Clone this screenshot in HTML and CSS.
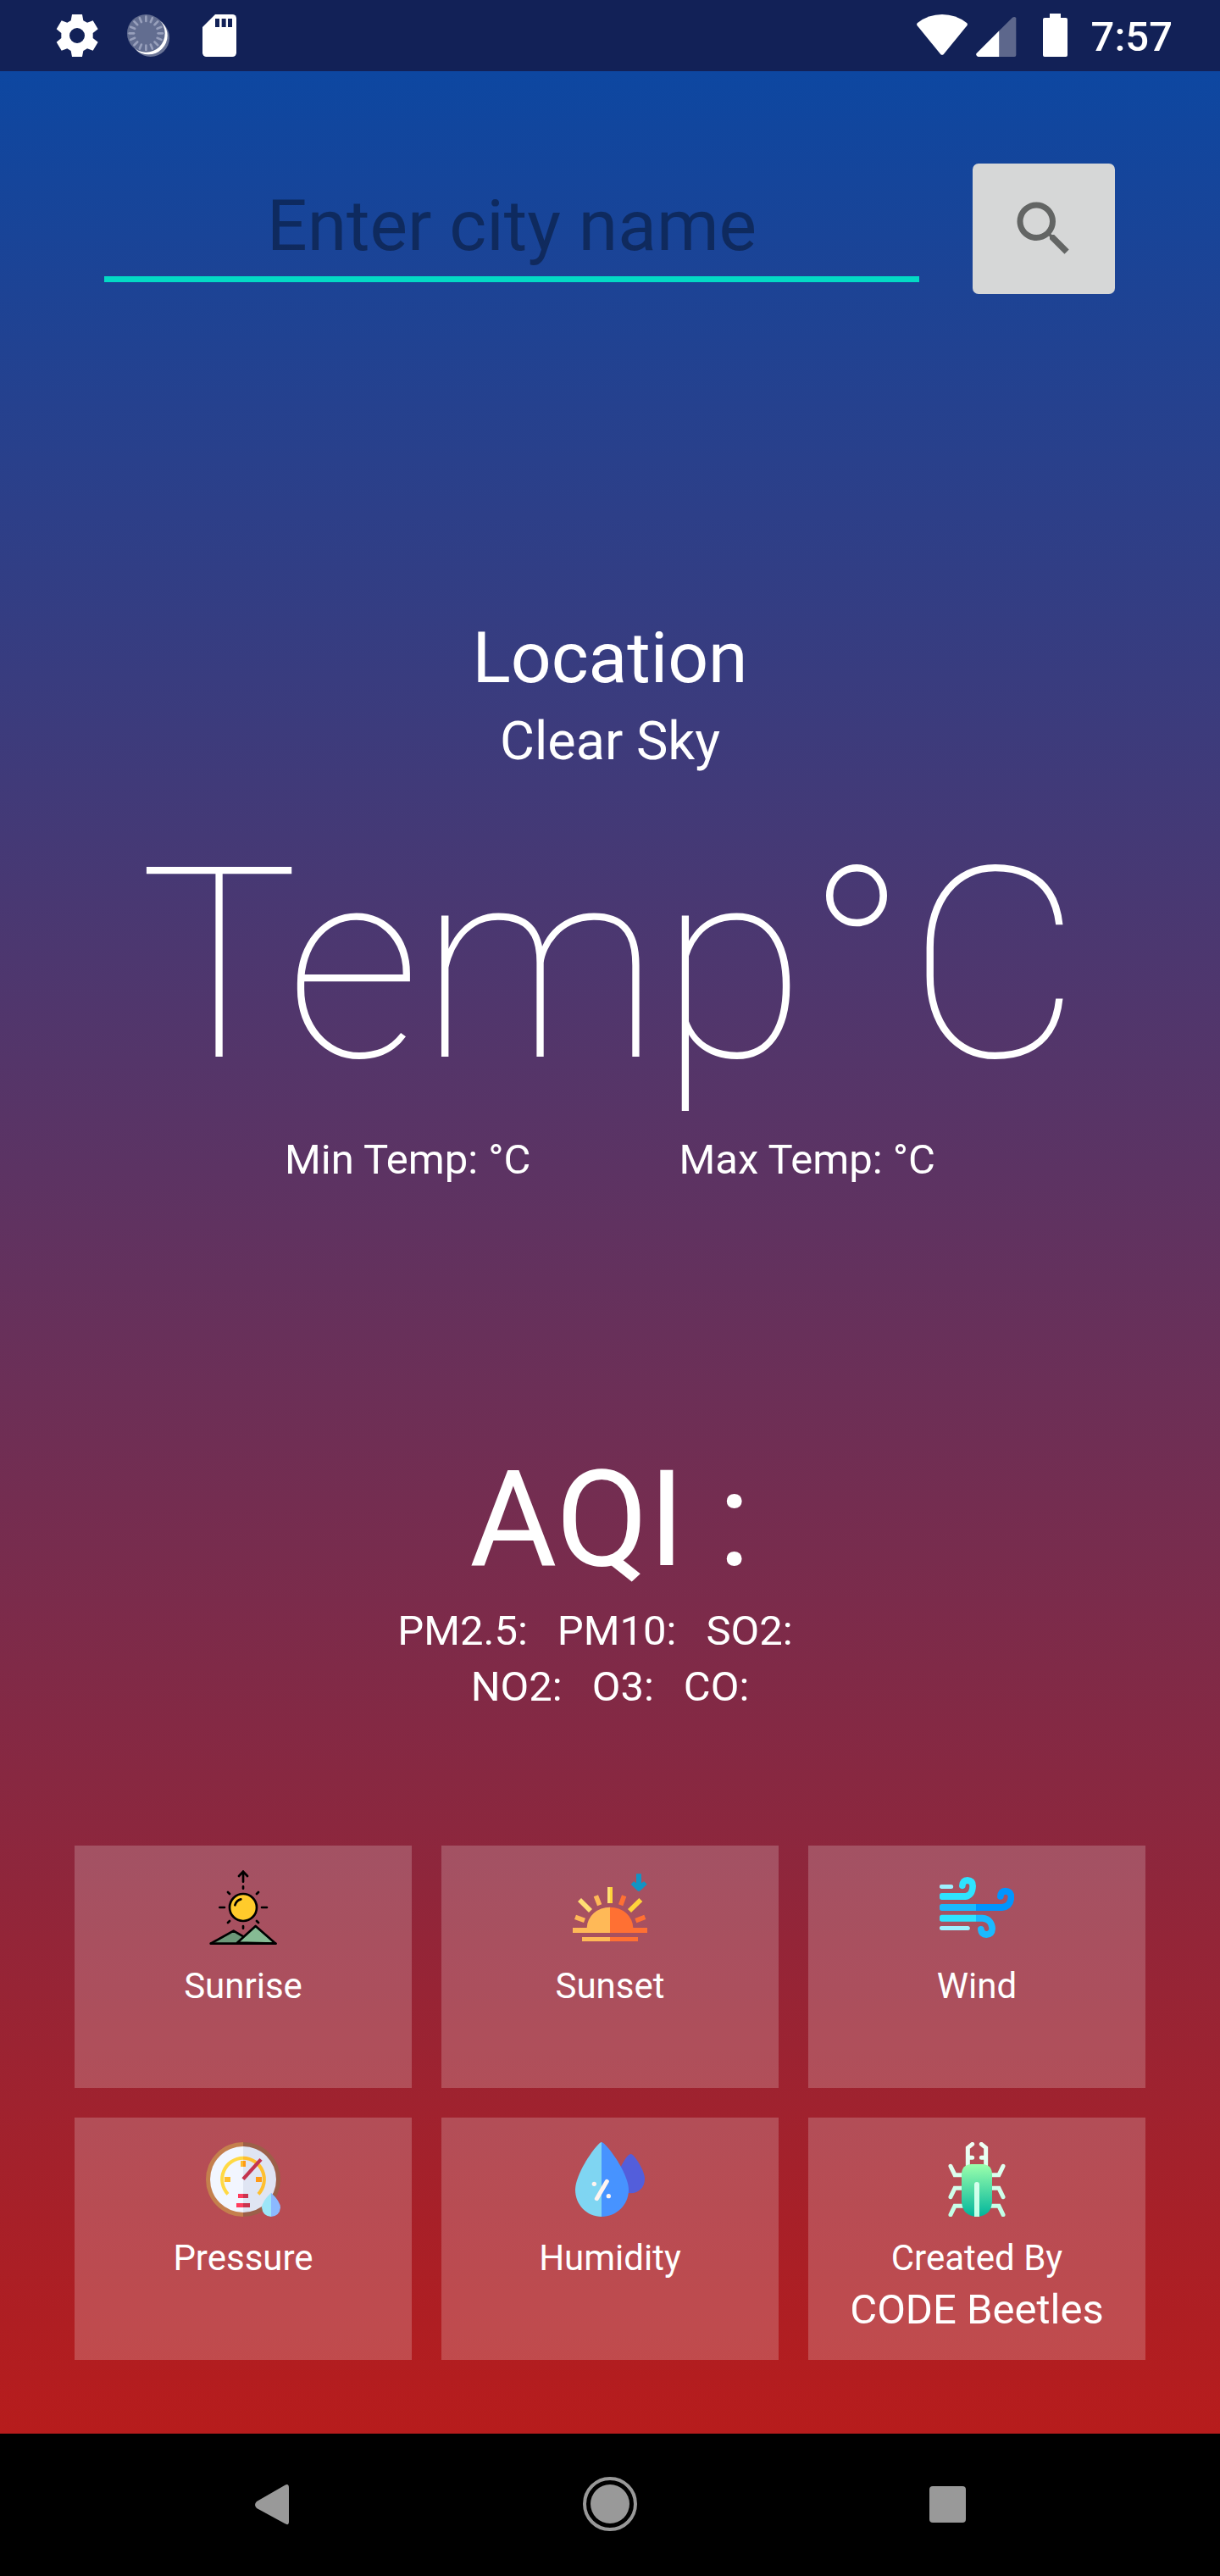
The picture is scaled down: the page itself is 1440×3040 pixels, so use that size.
FILE: index.html
```html
<!DOCTYPE html>
<html lang="en">
<head>
  <meta charset="utf-8">
  <meta name="viewport" content="width=device-width, initial-scale=1">
  <title>Weather</title>
  <link rel="stylesheet" href="styles.css">
</head>
<body>
  <header class="status-bar">
    <div class="status-group status-left">
      <svg class="status-icon" viewBox="183 36 180 180" role="img" aria-label="Settings">
        <path fill="#fff" fill-rule="evenodd" d="M255 51H291L295 73L309 80L329 73L347 103L329 117V135L347 149L329 179L309 172L295 180L291 201H255L251 180L238 172L218 179L200 149L217 135V117L200 103L218 73L238 80L251 73ZM273 99a27 27 0 1 0 0 54a27 27 0 1 0 0-54Z"/>
      </svg>
      <svg class="status-icon" viewBox="435 36 180 180" role="img" aria-label="Syncing">
        <circle cx="533" cy="134" r="67" fill="#6a7496"/>
        <circle cx="526" cy="126" r="67" fill="#fff"/>
        <circle cx="517" cy="118" r="67" fill="#626d90"/>
        <g stroke="#979fbb" stroke-width="8" stroke-linecap="round">
          <path d="M517 59V75"/>
          <path d="M517 59V75" transform="rotate(22.5 517 118)"/>
          <path d="M517 59V75" transform="rotate(45 517 118)"/>
          <path d="M517 59V75" transform="rotate(67.5 517 118)"/>
          <path d="M517 59V75" transform="rotate(90 517 118)"/>
          <path d="M517 59V75" transform="rotate(112.5 517 118)"/>
          <path d="M517 59V75" transform="rotate(135 517 118)"/>
          <path d="M517 59V75" transform="rotate(157.5 517 118)"/>
          <path d="M517 59V75" transform="rotate(180 517 118)"/>
          <path d="M517 59V75" transform="rotate(202.5 517 118)"/>
          <path d="M517 59V75" transform="rotate(225 517 118)"/>
          <path d="M517 59V75" transform="rotate(247.5 517 118)"/>
          <path d="M517 59V75" transform="rotate(270 517 118)"/>
          <path d="M517 59V75" transform="rotate(292.5 517 118)"/>
          <path d="M517 59V75" transform="rotate(315 517 118)"/>
          <path d="M517 59V75" transform="rotate(337.5 517 118)"/>
        </g>
      </svg>
      <svg class="status-icon" viewBox="687 36 180 180" role="img" aria-label="SD card">
        <path fill="#fff" d="M762 51H823a14 14 0 0 1 14 14V187a14 14 0 0 1-14 14H731a14 14 0 0 1-14-14V96Z"/>
        <path fill="#122157" d="M762 66h15v30h-15zM785 66h15v30h-15zM807 66h15v30h-15z"/>
      </svg>
    </div>
    <div class="status-group status-right">
      <svg class="wifi" viewBox="366 48 180 156" role="img" aria-label="Wi-Fi">
        <path fill="#fff" d="M369 81Q407 51 456 51T543 81Q548 85 544 91L462 191Q456 198 450 191L368 91Q364 85 369 81Z"/>
      </svg>
      <svg class="signal" viewBox="575 48 144 156" role="img" aria-label="Mobile signal">
        <path fill="#5d678c" d="M657 109L704 62Q711 57 717 63V195Q717 201 711 201H657Z"/>
        <path fill="#fff" d="M657 109V201H583Q574 199 576 190Z"/>
      </svg>
      <svg class="battery" viewBox="813 48 87 156" role="img" aria-label="Battery">
        <path fill="#fff" d="M837 48H876V63H894Q900 63 900 69V195Q900 201 894 201H819Q813 201 813 195V69Q813 63 819 63H837Z"/>
      </svg>
      <time class="clock">7:57</time>
    </div>
  </header>

  <main class="weather">
    <form class="search">
      <input class="search-input" type="text" placeholder="Enter city name" aria-label="City name">
      <button class="search-button" type="button" aria-label="Search">
        <svg class="search-icon" viewBox="0 0 24 24" aria-hidden="true">
          <path fill="#636564" d="M15.5 14h-.79l-.28-.27C15.41 12.59 16 11.11 16 9.5 16 5.91 13.09 3 9.5 3S3 5.91 3 9.5 5.91 16 9.5 16c1.61 0 3.09-.59 4.23-1.57l.27.28v.79l5 4.99L20.49 19l-4.99-5zm-6 0C7.01 14 5 11.99 5 9.5S7.01 5 9.5 5 14 7.01 14 9.5 11.99 14 9.5 14z"/>
        </svg>
      </button>
    </form>

    <section class="current">
      <h1 class="location">Location</h1>
      <p class="condition">Clear Sky</p>
      <p class="temperature">Temp°C</p>
      <div class="range">
        <span>Min Temp: °C</span>
        <span>Max Temp: °C</span>
      </div>
    </section>

    <section class="air">
      <h2 class="air-title">AQI :</h2>
      <div class="pollutants pollutants-first">
        <span>PM2.5:</span>
        <span>PM10:</span>
        <span>SO2:</span>
      </div>
      <div class="pollutants">
        <span>NO2:</span>
        <span>O3:</span>
        <span>CO:</span>
      </div>
    </section>

    <section class="cards">
      <article class="card">
        <svg class="card-icon" viewBox="69 81 264 264" aria-hidden="true">
          <path d="M88 341L167 296L204 318L178 341Z" fill="#6c9778"/>
          <path d="M178 341L245 279L316 341Z" fill="#86bb94"/>
          <path d="M86 341L167 296L203 317M180 338L245 279L316 341Z" fill="none" stroke="#000" stroke-width="8" stroke-linejoin="round"/>
          <path d="M86 341H316" stroke="#000" stroke-width="8" stroke-linecap="round"/>
          <circle cx="201" cy="213" r="48" fill="#ffcb2b" stroke="#000" stroke-width="8"/>
          <path d="M172 205Q177 188 193 184" fill="none" stroke="#000" stroke-width="8" stroke-linecap="round"/>
          <path d="M201 122V86M186 102L201 86L216 102M201 139V146M201 279V287M118 213H135M267 213H285M147 159L153 165M255 159L249 165M147 267L153 261M255 267L249 261" fill="none" stroke="#000" stroke-width="8" stroke-linecap="round"/>
        </svg>
        <h3 class="card-label">Sunrise</h3>
        <p class="card-value"></p>
      </article>

      <article class="card">
        <svg class="card-icon" viewBox="108 81 264 264" aria-hidden="true">
          <path fill="#ffb957" d="M240 212V303H108V285H158A82 74 0 0 1 240 212ZM141 318H240V333H141Z"/>
          <path fill="#ff7033" d="M240 212V303H372V285H322A82 74 0 0 0 240 212ZM240 318H339V333H240Z"/>
          <g fill="none" stroke-width="17">
            <path stroke="#ffe073" d="M132 186L171 225"/>
            <path stroke="#ffb957" d="M190 172L203 205M117 247L150 259"/>
            <path stroke="#ff7033" d="M290 172L278 205M364 247L331 260"/>
            <path stroke="#ffd33b" d="M349 186L309 225"/>
          </g>
          <path fill="#ffe073" d="M231 141h9v57h-9z"/>
          <path fill="#ffd33b" d="M240 141h9v57h-9z"/>
          <path fill="#1294c4" d="M333 94H351V127L361 121L371 131L347 154Q342 158 337 154L314 131L324 121L333 127Z"/>
        </svg>
        <h3 class="card-label">Sunset</h3>
        <p class="card-value"></p>
      </article>

      <article class="card">
        <svg class="card-icon" viewBox="87 81 264 264" aria-hidden="true">
          <path fill="#9ef0ff" d="M94 132H128a7 7 0 0 1 0 15H94a7 7 0 0 1 0-15ZM94 279H187a7 7 0 0 1 0 15H94a7 7 0 0 1 0-15Z"/>
          <path fill="#2ee3ff" d="M95 162H178Q193 159 193 138Q193 129 185 129Q180 129 179 136A11 11 0 0 1 156 136Q158 106 186 105Q216 107 216 137Q214 180 180 186H95Q87 186 87 178V170Q87 162 95 162Z"/>
          <path fill="#2ee3ff" d="M95 239H216V263H95Q87 263 87 255V247Q87 239 95 239Z"/>
          <path fill="#1abaff" d="M95 201H216V225H95Q87 225 87 217V209Q87 201 95 201ZM216 239H239C271 241 285 266 285 289Q283 320 253 321Q224 320 222 291A11 11 0 0 1 245 290Q247 297 253 297Q262 296 262 287Q260 264 239 263H216Z"/>
          <path fill="#0095ff" d="M216 201H307Q328 199 329 176Q329 167 321 167Q315 167 314 174A11 11 0 0 1 291 174Q293 144 320 143Q351 145 352 175Q350 220 309 225H216Z"/>
        </svg>
        <h3 class="card-label">Wind</h3>
        <p class="card-value"></p>
      </article>

      <article class="card">
        <svg class="card-icon" viewBox="69 81 264 264" aria-hidden="true">
          <path fill="#c47f4d" d="M201 81a132 132 0 0 0 0 264Z"/>
          <path fill="#9c5f49" d="M201 81a132 132 0 0 1 0 264Z"/>
          <path fill="#f2f6ff" d="M201 96a117 117 0 0 0 0 234Z"/>
          <path fill="#dfe5f3" d="M201 96a117 117 0 0 1 0 234Z"/>
          <path d="M147 265A76 76 0 0 1 201 137" fill="none" stroke="#ffd944" stroke-width="12"/>
          <path d="M201 137A76 76 0 0 1 255 265" fill="none" stroke="#ffbf2e" stroke-width="12"/>
          <path fill="#ffbd2e" d="M135 204h21v18h-21zM192 147h9v21h-9z"/>
          <path fill="#ff9a16" d="M246 204h21v18h-21zM201 147h9v21h-9z"/>
          <path d="M201 212L264 142" stroke="#c4344f" stroke-width="13"/>
          <path fill="#ff3d5e" d="M183 264h18v15h-18zM177 297h24v15h-24z"/>
          <path fill="#c9344f" d="M201 264h18v15h-18zM201 297h24v15h-24z"/>
          <path fill="#9ce5f8" d="M300 260Q267 291 267 313Q270 343 300 345Z"/>
          <path fill="#8bb9ff" d="M300 260Q333 291 333 313Q330 343 300 345Z"/>
        </svg>
        <h3 class="card-label">Pressure</h3>
        <p class="card-value"></p>
      </article>

      <article class="card">
        <svg class="card-icon" viewBox="108 81 264 264" aria-hidden="true">
          <path fill="#535edb" d="M314 123C325 123 363 181 363 211C363 242 341 262 314 262Q294 262 280 250L272 180C290 144 304 123 314 123Z"/>
          <path fill="#7fd5f2" d="M210 81C196 81 117 190 117 250C117 303 158 345 210 345Z"/>
          <path fill="#4793ff" d="M210 81C225 81 306 190 306 250C306 303 263 345 210 345Z"/>
          <path d="M193 281L229 220" stroke="#fff4f0" stroke-width="15" stroke-linecap="round"/>
          <circle cx="184" cy="229" r="8" fill="#fff4f0"/>
          <circle cx="235" cy="272" r="8" fill="#fff4f0"/>
        </svg>
        <h3 class="card-label">Humidity</h3>
        <p class="card-value"></p>
      </article>

      <article class="card">
        <svg class="card-icon" viewBox="447 111 264 264" aria-hidden="true">
          <defs>
            <linearGradient id="shell" x1="0" y1="0" x2="0" y2="1">
              <stop offset="0" stop-color="#9cffac"/>
              <stop offset="1" stop-color="#00b59c"/>
            </linearGradient>
            <linearGradient id="limbs" gradientUnits="userSpaceOnUse" x1="0" y1="111" x2="0" y2="375">
              <stop offset="0" stop-color="#f0fff4"/>
              <stop offset="1" stop-color="#c0ffe6"/>
            </linearGradient>
          </defs>
          <g fill="none" stroke="url(#limbs)" stroke-width="15" stroke-linecap="round" stroke-linejoin="miter">
            <path d="M547 192V131L563 118M547 166H563M611 192V131L595 118M611 166H595"/>
            <path d="M530 227H501L486 196M628 227H657L672 196M530 274H501L486 305M628 274H657L672 305M530 337H501L486 368M628 337H657L672 368"/>
          </g>
          <path fill="url(#shell)" d="M560 189H598Q633 191 633 225V322Q630 373 579 375Q528 373 525 322V225Q525 191 560 189Z"/>
          <path fill="url(#limbs)" d="M570 375V261a9 9 0 0 1 18 0V375Z"/>
        </svg>
        <h3 class="card-label">Created By</h3>
        <p class="card-value">CODE Beetles</p>
      </article>
    </section>
  </main>

  <nav class="nav-bar" aria-label="System navigation">
    <button class="nav-button" type="button" aria-label="Back">
      <svg class="nav-icon" viewBox="0 0 84 84" aria-hidden="true">
        <path fill="#999" d="M57 19Q62 16 62 22V62Q62 67 57 64L24 46Q20 42 24 38Z"/>
      </svg>
    </button>
    <button class="nav-button" type="button" aria-label="Home">
      <svg class="nav-icon" viewBox="0 0 84 84" aria-hidden="true">
        <circle cx="42" cy="41" r="30" fill="none" stroke="#999" stroke-width="4"/>
        <circle cx="42" cy="41" r="23" fill="#999"/>
      </svg>
    </button>
    <button class="nav-button" type="button" aria-label="Overview">
      <svg class="nav-icon" viewBox="0 0 84 84" aria-hidden="true">
        <rect x="20" y="20" width="43" height="43" rx="4" fill="#999"/>
      </svg>
    </button>
  </nav>
</body>
</html>
```
FILE: styles.css
```css
* {
  box-sizing: border-box;
}

body {
  margin: 0;
  min-height: 100vh;
  display: flex;
  flex-direction: column;
  background: #000;
  color: #fff;
  font-family: Roboto, "Liberation Sans", sans-serif;
  font-size: 49px;
  line-height: 66px;
}

h1,
h2,
h3,
p {
  margin: 0;
  font-weight: 400;
}

svg {
  display: block;
}

/* Status bar */

.status-bar {
  display: flex;
  justify-content: space-between;
  align-items: center;
  height: 84px;
  padding: 0 56px 0 61px;
  background: #122157;
}

.status-group {
  display: flex;
  align-items: center;
}

.status-left {
  gap: 24px;
}

.status-icon {
  width: 60px;
  height: 60px;
}

.wifi {
  width: 60px;
  height: 52px;
  margin-right: 10px;
}

.signal {
  width: 48px;
  height: 52px;
  margin-right: 31px;
}

.battery {
  width: 29px;
  height: 52px;
  margin-right: 28px;
}

.clock {
  padding-top: 4px;
  font-weight: 500;
}

/* Weather screen */

.weather {
  flex: 1;
  display: flex;
  flex-direction: column;
  padding: 109px 88px 87px;
  background: linear-gradient(#0d47a1, #b71c1c);
}

.search {
  display: flex;
  align-items: flex-end;
  gap: 63px;
  padding: 0 36px 0 35px;
}

.search-input {
  flex: 1;
  min-width: 0;
  margin: 0 0 14px;
  padding: 0 0 3px;
  border: 0;
  border-bottom: 7px solid #03dac5;
  outline: 0;
  background: none;
  color: #fff;
  font: inherit;
  font-size: 84px;
  line-height: 112px;
  text-align: center;
}

.search-input::placeholder {
  color: rgba(0, 0, 0, 0.38);
  opacity: 1;
}

.search-button {
  display: flex;
  align-items: center;
  justify-content: center;
  width: 168px;
  height: 154px;
  padding: 0;
  border: 0;
  border-radius: 7px;
  background: #d6d7d7;
}

.search-icon {
  width: 84px;
  height: 84px;
}

.current {
  margin-top: 374px;
  text-align: center;
}

.location {
  font-size: 84px;
  line-height: 112px;
}

.condition {
  font-size: 63px;
  line-height: 84px;
}

.temperature {
  margin-top: 27px;
  font-size: 315px;
  font-weight: 100;
  line-height: 392px;
}

.range {
  display: flex;
  justify-content: center;
  gap: 175px;
}

.air {
  margin-top: 292px;
  text-align: center;
}

.air-title {
  font-size: 158px;
  line-height: 198px;
}

.pollutants {
  display: flex;
  justify-content: center;
  gap: 35px;
}

.pollutants-first {
  padding-right: 35px;
}

/* Detail cards */

.cards {
  display: grid;
  grid-template-columns: repeat(3, 1fr);
  gap: 35px;
  margin-top: 154px;
}

.card {
  display: flex;
  flex-direction: column;
  align-items: center;
  padding: 29px 0 26px;
  background: rgba(255, 255, 255, 0.2);
}

.card-icon {
  width: 88px;
  height: 88px;
  margin-bottom: 21px;
}

.card-label {
  font-size: 42px;
  line-height: 56px;
}

.card-value {
  min-height: 66px;
}

/* Navigation bar */

.nav-bar {
  display: flex;
  justify-content: center;
  align-items: center;
  gap: 315px;
  height: 168px;
  background: #000;
}

.nav-button {
  padding: 0;
  border: 0;
  background: none;
}

.nav-icon {
  width: 84px;
  height: 84px;
}
```
